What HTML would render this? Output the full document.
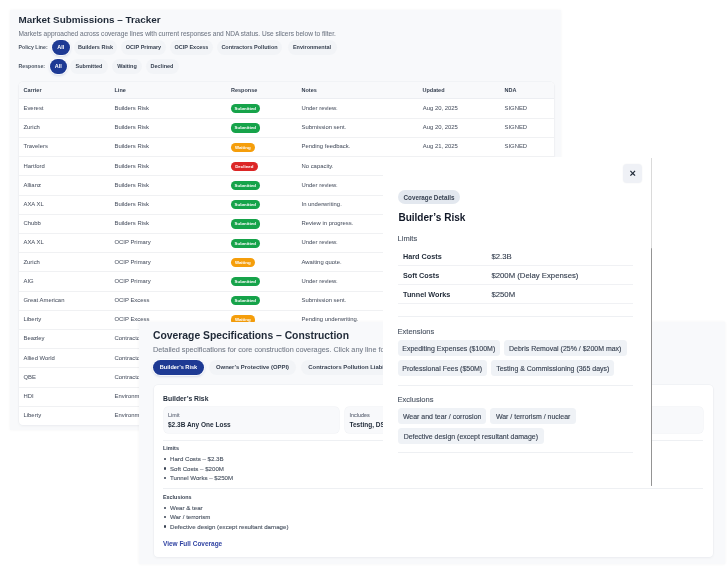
<!DOCTYPE html>
<html><head><meta charset="utf-8">
<style>
*{box-sizing:border-box;margin:0;padding:0}
html,body{width:727px;height:571px;overflow:hidden;background:#fff;font-family:"Liberation Sans",sans-serif;color:#1f2937}
.abs{position:absolute}
.panel,#drw{will-change:transform}
.chip,.sec,.kv span,.ul,.bl{-webkit-text-stroke:0.12px currentColor}
.sub{-webkit-text-stroke:0.05px currentColor}
.panel{position:absolute;background:#f8f9fb;box-shadow:0 0 3px rgba(15,23,42,0.045)}
#trk{left:10px;top:10px;width:550.5px;height:419.5px}
.inw{position:absolute;left:0;top:0.5px;width:100%;height:100%}
.t1{position:absolute;font-weight:700;color:#1f2937;white-space:nowrap}
.sub{position:absolute;color:#6f7784;white-space:nowrap}
.lbl{position:absolute;font-weight:700;color:#4b5563;white-space:nowrap;font-size:5.2px}
.pill{position:absolute;border-radius:8px;background:#f2f4f7;color:#374151;font-weight:700;font-size:5.5px;display:flex;align-items:center;justify-content:center;white-space:nowrap}
.pill.on{background:#1e3a94;color:#fff;box-shadow:0 0 0 1px rgba(255,255,255,.8),0 1px 3px rgba(30,58,138,.28)}
.card{position:absolute;background:#fff;border-radius:4px;box-shadow:0 0 0 0.5px #eceef2,0 1px 3px rgba(15,23,42,0.05)}
.tbl{position:absolute;left:0;top:0;width:100%}
.row{position:absolute;left:0;width:100%;height:19.2px;border-bottom:0.6px solid #f0f1f3}
.row span{position:absolute;top:-0.6px;line-height:19.2px;font-size:5.9px;color:#4a5261;-webkit-text-stroke:0.03px #4a5261;white-space:nowrap}
.hdr{position:absolute;left:0;top:0;width:100%;height:17px;background:#f8f9fb;border-radius:4px 4px 0 0;border-bottom:0.6px solid #eceef2}
.hdr span{position:absolute;top:0;line-height:17px;font-size:5.5px;font-weight:700;color:#374151;white-space:nowrap}
.badge{position:absolute;top:4.6px;height:9.2px;border-radius:4.6px;color:#fff;font-weight:700;font-size:4.4px;display:flex;align-items:center;justify-content:center}
.g{background:#16a34a;width:29px}
.y{background:#f59e0b;width:24px}
.r{background:#dc2626;width:27px}

.box{position:absolute;background:#f8f9fb;border-radius:4px;box-shadow:0 0 0 0.5px #eef0f3}
.bl{position:absolute;left:4.5px;top:4.8px;font-size:5.4px;line-height:6px;color:#6b7280;white-space:nowrap}
.bv{position:absolute;left:4.5px;top:12.3px;font-size:6.5px;line-height:9px;font-weight:700;color:#1f2937;white-space:nowrap}
.sep{position:absolute;height:0.6px;background:#eef0f3}
.ul{position:absolute;list-style:none;font-size:6.15px;line-height:9.35px;color:#4b5563;white-space:nowrap}
.ul li{padding-left:7px;position:relative;height:9.35px}
.ul li:before{content:"";position:absolute;left:1.2px;top:3.7px;width:2.2px;height:2.2px;background:#374151;border-radius:1.1px}
.close{position:absolute;background:#eff1f6;border-radius:4px;box-shadow:0 0 2px rgba(15,23,42,0.05);display:flex;align-items:center;justify-content:center;font-size:11px;font-weight:700;color:#1f2937;line-height:1}
.chip2{position:absolute;background:#e3e8ef;border-radius:7px;color:#374151;font-size:6.27px;font-weight:700;display:flex;align-items:center;justify-content:center;white-space:nowrap}
.sec{position:absolute;font-size:7.5px;line-height:8px;color:#4b5563;white-space:nowrap}
.kv{position:absolute;left:14px;width:235px;height:19px;border-bottom:0.6px solid #f0f1f4}
.kv b{position:absolute;left:5px;top:0;line-height:19px;font-size:7.25px;color:#1f2937;white-space:nowrap}
.kv span{position:absolute;left:93.4px;top:0;line-height:19px;font-size:7.75px;color:#374151;white-space:nowrap}
.chip{position:absolute;height:16px;background:#eff2f6;border-radius:3.5px;color:#374151;font-size:6.98px;display:flex;align-items:center;justify-content:center;white-space:nowrap}
.sbtrack{position:absolute;left:266.8px;top:1px;width:1.1px;height:91px;background:#dadada}
.sbthumb{position:absolute;left:266.8px;top:91px;width:1.1px;height:237.5px;background:#949494;border-radius:0.5px}
</style></head><body>

<!-- TRACKER PANEL -->
<div class="panel" id="trk"><div class="inw">
  <div class="t1" style="left:8.5px;top:2px;font-size:9.9px;line-height:14px">Market Submissions – Tracker</div>
  <div class="sub" style="left:8.5px;top:19px;font-size:6.55px;line-height:8px">Markets approached across coverage lines with current responses and NDA status. Use slicers below to filter.</div>

  <div class="lbl" style="left:8.5px;top:32.4px;line-height:8px">Policy Line:</div>
  <div class="pill on" style="left:41.5px;top:29px;width:18.5px;height:15px">All</div>
  <div class="pill" style="left:64px;top:29px;width:43px;height:15px">Builders Risk</div>
  <div class="pill" style="left:111px;top:29px;width:45px;height:15px">OCIP Primary</div>
  <div class="pill" style="left:160px;top:29px;width:43px;height:15px">OCIP Excess</div>
  <div class="pill" style="left:207px;top:29px;width:65px;height:15px">Contractors Pollution</div>
  <div class="pill" style="left:277.5px;top:29px;width:49px;height:15px">Environmental</div>

  <div class="lbl" style="left:8.5px;top:51.4px;line-height:8px">Response:</div>
  <div class="pill on" style="left:39.5px;top:48.5px;padding-bottom:1.8px;width:17.5px;height:15px">All</div>
  <div class="pill" style="left:60px;top:48.5px;padding-bottom:1.8px;width:38px;height:15px">Submitted</div>
  <div class="pill" style="left:102px;top:48.5px;padding-bottom:1.8px;width:30px;height:15px">Waiting</div>
  <div class="pill" style="left:135.5px;top:48.5px;padding-bottom:1.8px;width:33px;height:15px">Declined</div>

  <div class="card" style="left:8.5px;top:71.5px;width:535px;height:343px;overflow:hidden">
    <div class="hdr"><span style="left:5px">Carrier</span><span style="left:96px">Line</span><span style="left:212.5px">Response</span><span style="left:283px">Notes</span><span style="left:404px">Updated</span><span style="left:486px">NDA</span></div>
    <div class="row" style="top:17.60px"><span style="left:5px">Everest</span><span style="left:96px">Builders Risk</span><div class="badge g" style="left:212.3px">Submitted</div><span style="left:283px">Under review.</span><span style="left:404.3px">Aug 20, 2025</span><span style="left:486px">SIGNED</span></div>
<div class="row" style="top:36.80px"><span style="left:5px">Zurich</span><span style="left:96px">Builders Risk</span><div class="badge g" style="left:212.3px">Submitted</div><span style="left:283px">Submission sent.</span><span style="left:404.3px">Aug 20, 2025</span><span style="left:486px">SIGNED</span></div>
<div class="row" style="top:56.00px"><span style="left:5px">Travelers</span><span style="left:96px">Builders Risk</span><div class="badge y" style="left:212.3px">Waiting</div><span style="left:283px">Pending feedback.</span><span style="left:404.3px">Aug 21, 2025</span><span style="left:486px">SIGNED</span></div>
<div class="row" style="top:75.20px"><span style="left:5px">Hartford</span><span style="left:96px">Builders Risk</span><div class="badge r" style="left:212.3px">Declined</div><span style="left:283px">No capacity.</span><span style="left:404.3px">Aug 19, 2025</span><span style="left:486px">N/A</span></div>
<div class="row" style="top:94.40px"><span style="left:5px">Allianz</span><span style="left:96px">Builders Risk</span><div class="badge g" style="left:212.3px">Submitted</div><span style="left:283px">Under review.</span><span style="left:404.3px">Aug 20, 2025</span><span style="left:486px">SIGNED</span></div>
<div class="row" style="top:113.60px"><span style="left:5px">AXA XL</span><span style="left:96px">Builders Risk</span><div class="badge g" style="left:212.3px">Submitted</div><span style="left:283px">In underwriting.</span><span style="left:404.3px">Aug 18, 2025</span><span style="left:486px">SIGNED</span></div>
<div class="row" style="top:132.80px"><span style="left:5px">Chubb</span><span style="left:96px">Builders Risk</span><div class="badge g" style="left:212.3px">Submitted</div><span style="left:283px">Review in progress.</span><span style="left:404.3px">Aug 20, 2025</span><span style="left:486px">SIGNED</span></div>
<div class="row" style="top:152.00px"><span style="left:5px">AXA XL</span><span style="left:96px">OCIP Primary</span><div class="badge g" style="left:212.3px">Submitted</div><span style="left:283px">Under review.</span><span style="left:404.3px">Aug 20, 2025</span><span style="left:486px">SIGNED</span></div>
<div class="row" style="top:171.20px"><span style="left:5px">Zurich</span><span style="left:96px">OCIP Primary</span><div class="badge y" style="left:212.3px">Waiting</div><span style="left:283px">Awaiting quote.</span><span style="left:404.3px">Aug 21, 2025</span><span style="left:486px">SIGNED</span></div>
<div class="row" style="top:190.40px"><span style="left:5px">AIG</span><span style="left:96px">OCIP Primary</span><div class="badge g" style="left:212.3px">Submitted</div><span style="left:283px">Under review.</span><span style="left:404.3px">Aug 20, 2025</span><span style="left:486px">SIGNED</span></div>
<div class="row" style="top:209.60px"><span style="left:5px">Great American</span><span style="left:96px">OCIP Excess</span><div class="badge g" style="left:212.3px">Submitted</div><span style="left:283px">Submission sent.</span><span style="left:404.3px">Aug 20, 2025</span><span style="left:486px">SIGNED</span></div>
<div class="row" style="top:228.80px"><span style="left:5px">Liberty</span><span style="left:96px">OCIP Excess</span><div class="badge y" style="left:212.3px">Waiting</div><span style="left:283px">Pending underwriting.</span><span style="left:404.3px">Aug 21, 2025</span><span style="left:486px">SIGNED</span></div>
<div class="row" style="top:248.00px"><span style="left:5px">Beazley</span><span style="left:96px">Contractors Pollution</span><div class="badge g" style="left:212.3px">Submitted</div><span style="left:283px">Under review.</span><span style="left:404.3px">Aug 20, 2025</span><span style="left:486px">SIGNED</span></div>
<div class="row" style="top:267.20px"><span style="left:5px">Allied World</span><span style="left:96px">Contractors Pollution</span><div class="badge g" style="left:212.3px">Submitted</div><span style="left:283px">Under review.</span><span style="left:404.3px">Aug 20, 2025</span><span style="left:486px">SIGNED</span></div>
<div class="row" style="top:286.40px"><span style="left:5px">QBE</span><span style="left:96px">Contractors Pollution</span><div class="badge y" style="left:212.3px">Waiting</div><span style="left:283px">Awaiting quote.</span><span style="left:404.3px">Aug 21, 2025</span><span style="left:486px">SIGNED</span></div>
<div class="row" style="top:305.60px"><span style="left:5px">HDI</span><span style="left:96px">Environmental</span><div class="badge g" style="left:212.3px">Submitted</div><span style="left:283px">Under review.</span><span style="left:404.3px">Aug 20, 2025</span><span style="left:486px">SIGNED</span></div>
<div class="row" style="top:324.80px"><span style="left:5px">Liberty</span><span style="left:96px">Environmental</span><div class="badge g" style="left:212.3px">Submitted</div><span style="left:283px">Under review.</span><span style="left:404.3px">Aug 20, 2025</span><span style="left:486px">SIGNED</span></div>
  </div>
</div></div>


<!-- SPEC PANEL -->
<div class="panel" id="spec" style="left:139px;top:322px;width:586px;height:241.5px;box-shadow:0 0 3px rgba(15,23,42,0.05)">
  <div class="t1" style="left:14px;top:7px;font-size:10.35px;line-height:14px">Coverage Specifications – Construction</div>
  <div class="sub" style="left:14px;top:23.5px;font-size:7.3px;line-height:8px">Detailed specifications for core construction coverages. Click any line for full details including limits, extensions and exclusions.</div>
  <div class="pill on" style="left:14px;top:37.5px;width:51px;height:15.2px;font-size:5.62px">Builder’s Risk</div>
  <div class="pill" style="left:70px;top:37.5px;width:87px;height:15.2px;font-size:5.9px">Owner’s Protective (OPPI)</div>
  <div class="pill" style="left:162.3px;top:37.5px;width:105px;height:15.2px;font-size:5.9px;justify-content:flex-start;padding-left:7px">Contractors Pollution Liability (CPL)</div>
  <div class="card" style="left:14.5px;top:63px;width:559.5px;height:172px">
    <div class="t1" style="left:9.6px;top:8.5px;font-size:6.8px;line-height:10px">Builder’s Risk</div>
    <div class="box" style="left:10px;top:22.3px;width:175.5px;height:26px"><div class="bl">Limit</div><div class="bv">$2.3B Any One Loss</div></div>
    <div class="box" style="left:191.5px;top:22.3px;width:358.3px;height:26px"><div class="bl">Includes</div><div class="bv">Testing, DSU, Hot Testing</div></div>
    <div class="sep" style="left:9.5px;top:55px;width:540px"></div>
    <div class="lbl" style="left:9.5px;top:59px;line-height:8px;font-size:5.4px;color:#374151">Limits</div>
    <ul class="ul" style="left:9.5px;top:69.4px"><li>Hard Costs – $2.3B</li><li>Soft Costs – $200M</li><li>Tunnel Works – $250M</li></ul>
    <div class="sep" style="left:9.5px;top:103px;width:540px"></div>
    <div class="lbl" style="left:9.5px;top:107.8px;line-height:8px;font-size:5.4px;color:#374151">Exclusions</div>
    <ul class="ul" style="left:9.5px;top:118.1px"><li>Wear &amp; tear</li><li>War / terrorism</li><li>Defective design (except resultant damage)</li></ul>
    <div class="t1" style="left:9.5px;top:155px;font-size:6.47px;line-height:8px;color:#3144a3">View Full Coverage</div>
  </div>
</div>

<!-- DRAWER -->
<div id="drw" style="position:absolute;left:383px;top:157px;width:269px;height:329px;background:#fff;box-shadow:none">
  <div class="drwin" style="position:absolute;left:1px;top:0;width:268px;height:329px">
  <div class="close" style="left:239.4px;top:7px;width:18.6px;height:18.7px">×</div>
  <div class="chip2" style="left:14px;top:33.3px;width:62px;height:13.7px">Coverage Details</div>
  <div class="t1" style="left:14.4px;top:53.5px;font-size:10.05px;line-height:14px;color:#111827">Builder’s Risk</div>
  <div class="sec" style="left:13.6px;top:77.8px">Limits</div>
  <div class="kv" style="top:89.6px"><b>Hard Costs</b><span>$2.3B</span></div>
  <div class="kv" style="top:108.6px"><b>Soft Costs</b><span>$200M (Delay Expenses)</span></div>
  <div class="kv" style="top:127.6px"><b>Tunnel Works</b><span>$250M</span></div>
  <div class="sep" style="left:14px;top:158.5px;width:235px"></div>
  <div class="sec" style="left:13.6px;top:171px">Extensions</div>
  <div class="chip" style="left:14px;top:183px;width:101.5px">Expediting Expenses ($100M)</div>
  <div class="chip" style="left:120px;top:183px;width:122.5px">Debris Removal (25% / $200M max)</div>
  <div class="chip" style="left:14px;top:203px;width:88.5px">Professional Fees ($50M)</div>
  <div class="chip" style="left:107.3px;top:203px;width:123px">Testing &amp; Commissioning (365 days)</div>
  <div class="sep" style="left:14px;top:227.6px;width:235px"></div>
  <div class="sec" style="left:13.6px;top:238.8px">Exclusions</div>
  <div class="chip" style="left:14px;top:251.2px;width:88.3px">Wear and tear / corrosion</div>
  <div class="chip" style="left:106.4px;top:251.2px;width:85.5px">War / terrorism / nuclear</div>
  <div class="chip" style="left:14px;top:271.2px;width:145.7px">Defective design (except resultant damage)</div>
  <div class="sep" style="left:14px;top:295.4px;width:235px"></div>
  <div class="sbtrack"></div><div class="sbthumb"></div>
</div></div>
</body></html>
